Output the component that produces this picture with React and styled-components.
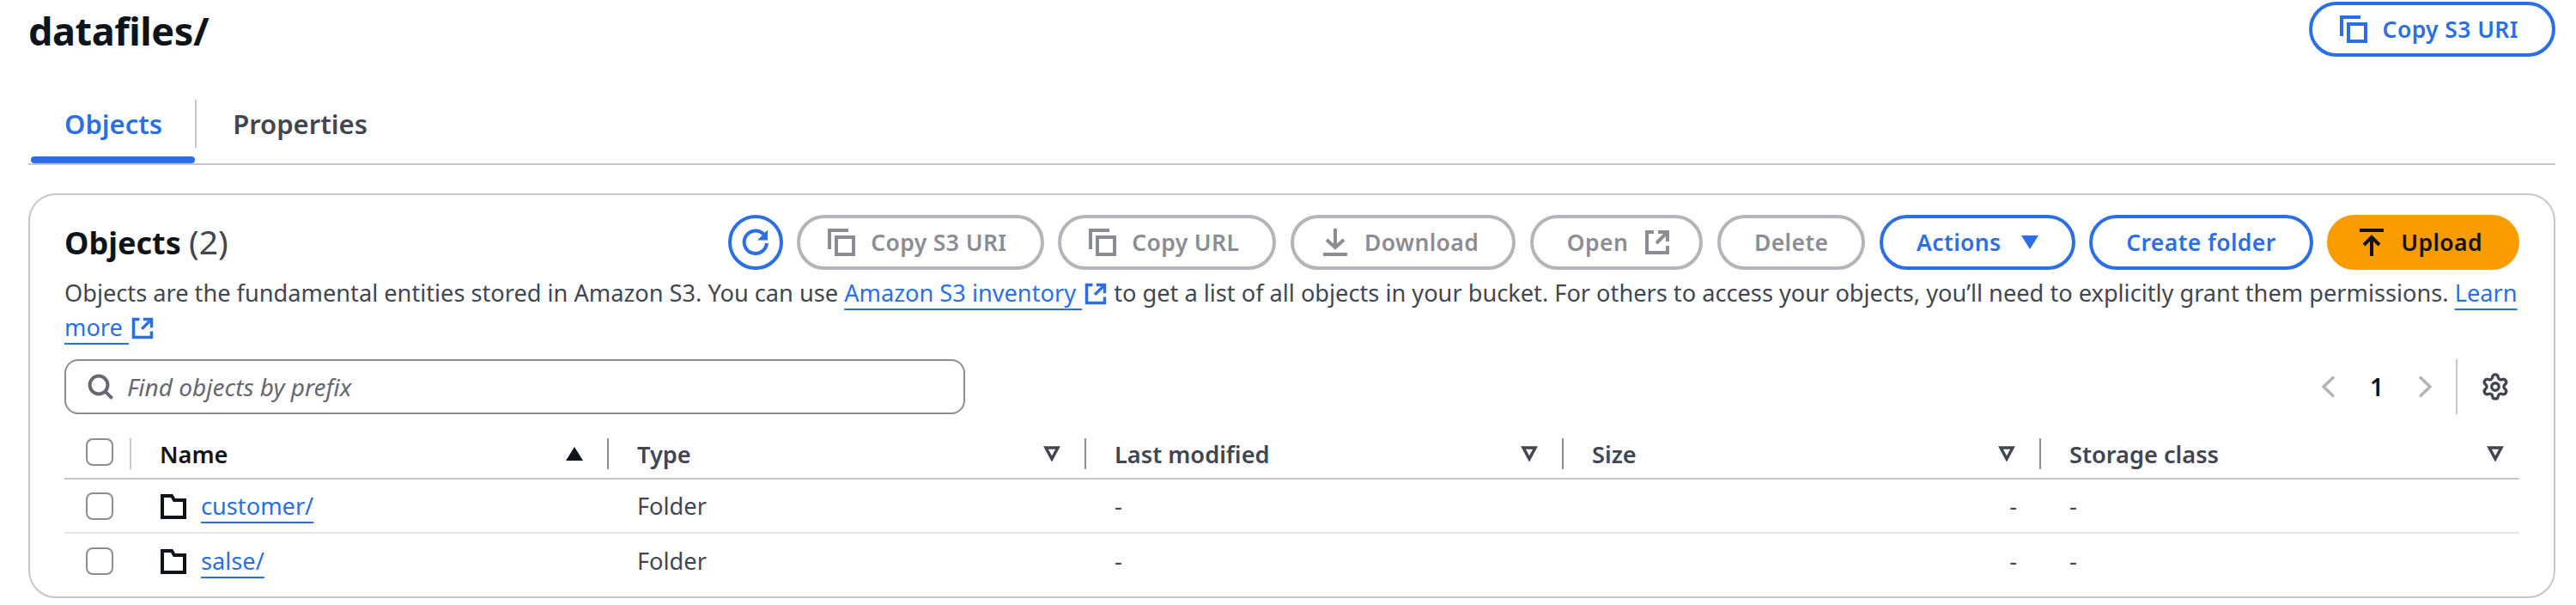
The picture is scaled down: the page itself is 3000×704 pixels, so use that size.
import React from "react";
import styled, { createGlobalStyle } from "styled-components";
import { Settings } from "lucide-react";

const BLUE = "#2b6fe6";
const DISABLED = "#8c8c94";
const DISABLED_BORDER = "#b4b4bb";
const INK = "#0f141a";
const BODY = "#424650";
const LINE = "#c6c6cd";

const Global = createGlobalStyle`
  * { box-sizing: border-box; }
  html, body { margin: 0; background: #fff; }
  body { font-family: "Noto Sans", "Open Sans", sans-serif; color: ${INK}; }
`;

const Page = styled.div`
  width: 3000px;
  height: 704px;
  overflow: hidden;
  padding: 2px 24px 0 33px;
`;
const TitleRow = styled.header`
  display: flex;
  justify-content: space-between;
  align-items: flex-start;
  height: 63px;
`;
const Title = styled.h1`
  margin: 0;
  font-size: 45px;
  line-height: 68px;
  font-weight: 700;
  letter-spacing: -0.4px;
`;
const Tabs = styled.nav`
  display: flex;
  margin-top: 33px;
  padding-top: 18px;
  height: 94px;
  border-bottom: 2px solid ${LINE};
  align-items: flex-start;
`;
const Tab = styled.div`
  position: relative;
  height: 56px;
  padding: 0 38px 0 42px;
  font-size: 31px;
  line-height: 56px;
  font-weight: 600;
  color: ${(p) => (p.$active ? BLUE : BODY)};
  border-right: ${(p) => (p.$divider ? `2px solid ${LINE}` : "none")};
  &::after {
    content: "";
    display: ${(p) => (p.$active ? "block" : "none")};
    position: absolute;
    left: 3px;
    right: 0;
    top: 66px;
    height: 8px;
    border-radius: 4px;
    background: ${BLUE};
  }
`;
const Card = styled.section`
  margin-top: 33px;
  height: 471px;
  border: 2px solid ${LINE};
  border-radius: 32px;
  padding: 23px 40px 0;
`;
const CardHead = styled.div`
  display: flex;
  justify-content: space-between;
  align-items: center;
  height: 64px;
`;
const Heading = styled.h2`
  margin: 0;
  font-size: 36px;
  line-height: 48px;
  font-weight: 700;
`;
const Count = styled.span`
  font-size: 39px;
  font-weight: 400;
  color: ${BODY};
`;
const Toolbar = styled.div`
  display: flex;
  gap: 16.6px;
  align-items: center;
`;
const Button = styled.div`
  display: inline-flex;
  align-items: center;
  justify-content: center;
  gap: ${(p) => p.$gap || 18}px;
  height: 64px;
  padding: 0 39px;
  border-radius: 32px;
  border: 4px solid ${(p) =>
    p.$kind === "primary" ? "#f89c00" : p.$kind === "normal" ? BLUE : DISABLED_BORDER};
  background: ${(p) => (p.$kind === "primary" ? "#f89c00" : "#fff")};
  color: ${(p) =>
    p.$kind === "primary" ? INK : p.$kind === "normal" ? BLUE : DISABLED};
  font-size: 26.5px;
  font-weight: 600;
  letter-spacing: 0.4px;
  white-space: nowrap;
`;
const ButtonIcon = styled.span`
  display: flex;
  margin: ${(p) => (p.$trailing ? "0 -6px 0 0" : "0 0 0 -7px")};
`;
const RoundButton = styled.div`
  display: flex;
  align-items: center;
  justify-content: center;
  width: 64px;
  height: 64px;
  border-radius: 50%;
  border: 4px solid ${BLUE};
  color: ${BLUE};
`;
const Description = styled.p`
  margin: 7px 0 0;
  font-size: 27.2px;
  line-height: 40px;
  color: ${BODY};
`;
const Link = styled.a`
  color: ${BLUE};
  text-decoration: underline;
  text-decoration-thickness: 2px;
  text-underline-offset: 8px;
`;
const ExternalWrap = styled.span`
  display: inline-block;
  vertical-align: -5px;
  margin-left: 2px;
  line-height: 0;
  color: ${BLUE};
`;
const FilterRow = styled.div`
  display: flex;
  justify-content: space-between;
  align-items: center;
  margin-top: 17px;
  height: 64px;
`;
const SearchBox = styled.div`
  display: flex;
  align-items: center;
  gap: 15px;
  width: 1049px;
  height: 64px;
  padding: 0 24px;
  border: 2px solid ${DISABLED};
  border-radius: 16px;
  color: #656871;
`;
const Placeholder = styled.span`
  font-size: 28px;
  font-style: italic;
  color: #656871;
`;
const Pager = styled.div`
  display: flex;
  align-items: center;
  height: 64px;
`;
const PageNum = styled.span`
  width: 96px;
  text-align: center;
  font-size: 28px;
  font-weight: 600;
  color: ${INK};
`;
const PagerDivider = styled.span`
  width: 2px;
  height: 64px;
  margin: 0 27px 0 28px;
  background: ${LINE};
`;
const GearWrap = styled.span`
  display: flex;
  margin-right: 11px;
  color: ${BODY};
`;
const COLS = "78px 556px 556px 556px 556px 1fr";
const HeadRow = styled.div`
  display: grid;
  grid-template-columns: ${COLS};
  height: 76px;
  padding-top: 28px;
  border-bottom: 2px solid ${LINE};
`;
const HeadCell = styled.div`
  display: flex;
  align-items: center;
  justify-content: space-between;
  height: 36px;
  padding: 0 ${(p) => (p.$last ? 18 : 28)}px 0 33px;
  border-right: ${(p) => (p.$last ? "none" : `2px solid ${DISABLED}`)};
  font-size: 27.2px;
  font-weight: 600;
  color: ${(p) => (p.$active ? INK : BODY)};
`;
const CheckCell = styled.div`
  display: flex;
  align-items: flex-start;
  height: ${(p) => (p.$head ? "36px" : "auto")};
  padding-left: 25px;
  border-right: ${(p) => (p.$head ? `2px solid ${LINE}` : "none")};
`;
const Check = styled.span`
  width: 32px;
  height: 32px;
  border: 2px solid ${DISABLED};
  border-radius: 8px;
  background: #fff;
`;
const Row = styled.div`
  display: grid;
  grid-template-columns: ${COLS};
  height: 63px;
  border-bottom: ${(p) => (p.$last ? "none" : "2px solid #e8e8ec")};
  align-items: center;
  font-size: 27.2px;
  color: ${BODY};
`;
const Cell = styled.div`
  display: flex;
  align-items: center;
  gap: 16px;
  padding: 0 ${(p) => (p.$right ? 28 : 0)}px 0 33px;
  justify-content: ${(p) => (p.$right ? "flex-end" : "flex-start")};
`;
const FolderIcon = styled.span`
  display: flex;
  color: ${INK};
`;

const Svg = ({ size = 32, children, sw = 2 }) => (
  <svg width={size} height={size} viewBox="0 0 16 16" fill="none" stroke="currentColor" strokeWidth={sw}>
    {children}
  </svg>
);
const CopyIcon = () => (
  <Svg>
    <path d="M1 12V1h11" />
    <rect x="5" y="5" width="10" height="10" />
  </Svg>
);
const RefreshIcon = () => (
  <Svg>
    <path d="M14.5 8.5A6.6 6.6 0 1 1 12.4 3l1.4 1.3" />
    <path d="M15 0.8v6h-6z" fill="currentColor" stroke="none" />
  </Svg>
);
const DownloadIcon = () => (
  <Svg>
    <path d="M8 0v11" />
    <path d="M3 6.5 8 11l5-4.5" />
    <path d="M1 15h14" />
  </Svg>
);
const UploadIcon = () => (
  <Svg>
    <path d="M1 1h14" />
    <path d="M8 16V5" />
    <path d="M3.5 9.5 8 5l4.5 4.5" />
  </Svg>
);
const ExternalIcon = ({ size = 28 }) => (
  <Svg size={size}>
    <path d="M14 7.5V2H8.5" />
    <path d="M14 2 7.5 8.5" />
    <path d="M6 2H2v12h12v-4" />
  </Svg>
);
const SearchIcon = () => (
  <Svg>
    <circle cx="7" cy="7" r="5.2" />
    <path d="m10.8 10.8 4 4" />
  </Svg>
);
const Folder = () => (
  <Svg>
    <path d="M1.5 14.5V2h5.5l1.5 2.5h6v10z" />
  </Svg>
);
const Caret = ({ up, hollow }) => (
  <svg width="20" height="18" viewBox="0 0 20 18">
    {hollow ? (
      <path d="M3 2h14l-7 13z" fill="none" stroke="currentColor" strokeWidth="3.5" />
    ) : up ? (
      <path d="M0 17h20L10 1z" fill="currentColor" />
    ) : (
      <path d="M0 1h20L10 17z" fill="currentColor" />
    )}
  </svg>
);
const Chevron = ({ right }) => (
  <svg width="16" height="26" viewBox="0 0 16 26" fill="none" stroke={DISABLED_BORDER} strokeWidth="3.5">
    <path d={right ? "M2 1.5 14 13 2 24.5" : "M14 1.5 2 13 14 24.5"} />
  </svg>
);

const rows = ["customer/", "salse/"];

export default function App() {
  return (
    <Page>
      <Global />
      <TitleRow>
        <Title>datafiles/</Title>
        <Button $kind="normal">
          <ButtonIcon><CopyIcon /></ButtonIcon>
          Copy S3 URI
        </Button>
      </TitleRow>
      <Tabs>
        <Tab $active $divider>Objects</Tab>
        <Tab>Properties</Tab>
      </Tabs>
      <Card>
        <CardHead>
          <Heading>
            Objects <Count>(2)</Count>
          </Heading>
          <Toolbar>
            <RoundButton><RefreshIcon /></RoundButton>
            <Button><ButtonIcon><CopyIcon /></ButtonIcon>Copy S3 URI</Button>
            <Button><ButtonIcon><CopyIcon /></ButtonIcon>Copy URL</Button>
            <Button><ButtonIcon><DownloadIcon /></ButtonIcon>Download</Button>
            <Button>Open<ButtonIcon $trailing><ExternalIcon size={32} /></ButtonIcon></Button>
            <Button>Delete</Button>
            <Button $kind="normal" $gap={23}>Actions<Caret /></Button>
            <Button $kind="normal">Create folder</Button>
            <Button $kind="primary"><ButtonIcon><UploadIcon /></ButtonIcon>Upload</Button>
          </Toolbar>
        </CardHead>
        <Description>
          Objects are the fundamental entities stored in Amazon S3. You can use{" "}
          <Link>Amazon S3 inventory </Link>
          <ExternalWrap><ExternalIcon /></ExternalWrap>{" "}
          to get a list of all objects in your bucket. For others to access your objects, you’ll need to explicitly grant them permissions.{" "}
          <Link>Learn more </Link>
          <ExternalWrap><ExternalIcon /></ExternalWrap>
        </Description>
        <FilterRow>
          <SearchBox>
            <SearchIcon />
            <Placeholder>Find objects by prefix</Placeholder>
          </SearchBox>
          <Pager>
            <Chevron />
            <PageNum>1</PageNum>
            <Chevron right />
            <PagerDivider />
            <GearWrap><Settings size={34} strokeWidth={2.4} /></GearWrap>
          </Pager>
        </FilterRow>
        <HeadRow>
          <CheckCell $head><Check /></CheckCell>
          <HeadCell $active>Name<Caret up /></HeadCell>
          <HeadCell>Type<Caret hollow /></HeadCell>
          <HeadCell>Last modified<Caret hollow /></HeadCell>
          <HeadCell>Size<Caret hollow /></HeadCell>
          <HeadCell $last>Storage class<Caret hollow /></HeadCell>
        </HeadRow>
        {rows.map((name, i) => (
          <Row key={name} $last={i === rows.length - 1}>
            <CheckCell><Check /></CheckCell>
            <Cell>
              <FolderIcon><Folder /></FolderIcon>
              <Link>{name}</Link>
            </Cell>
            <Cell>Folder</Cell>
            <Cell>-</Cell>
            <Cell $right>-</Cell>
            <Cell>-</Cell>
          </Row>
        ))}
      </Card>
    </Page>
  );
}
